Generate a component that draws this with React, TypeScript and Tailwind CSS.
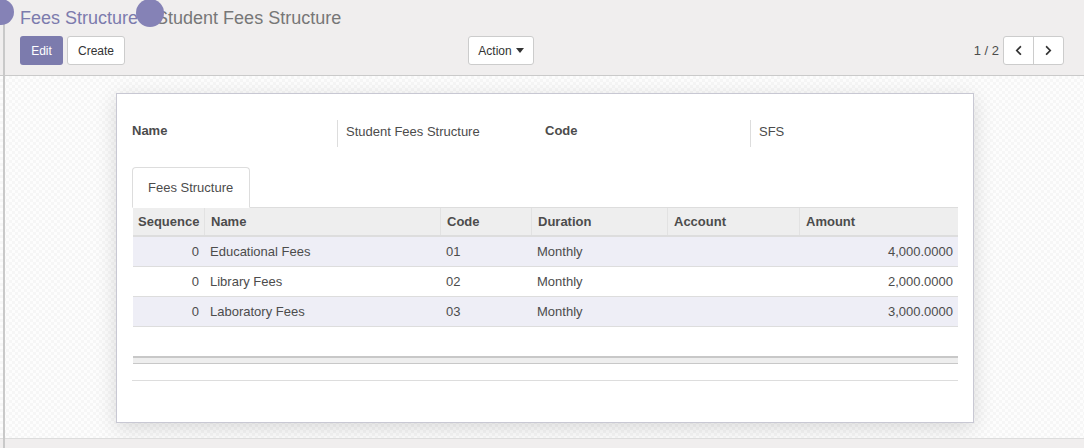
import React from "react";
import { FaChevronLeft, FaChevronRight } from "react-icons/fa";

const rows = [
  { seq: 0, name: "Educational Fees", code: "01", duration: "Monthly", account: "", amount: "4,000.0000" },
  { seq: 0, name: "Library Fees", code: "02", duration: "Monthly", account: "", amount: "2,000.0000" },
  { seq: 0, name: "Laboratory Fees", code: "03", duration: "Monthly", account: "", amount: "3,000.0000" },
];

export default function App() {
  return (
    <div className="relative w-[1084px] h-[448px] overflow-hidden bg-[#f0eeee] text-[13px] text-[#4c4c4c] font-['Liberation_Sans',Arial,sans-serif] flex flex-col">
      {/* left vertical line */}
      <div className="absolute left-[3px] top-[24px] bottom-0 w-[2px] bg-[#c9c9c9] z-10" />

      {/* control panel */}
      <div className="h-[76px] shrink-0 border-b border-[#cacaca] px-[20px] pt-[5px] flex flex-col">
        <div className="relative h-[26px] flex items-center text-[18px] leading-[26px]">
          <span className="text-[#7c7bad]">Fees Structure</span>
          <span className="text-[#777] px-[5px]">/</span>
          <span className="text-[#777] ml-[3px]">Student Fees Structure</span>
        </div>
        <div className="mt-[5px] flex items-center h-[29px]">
          <div className="flex gap-[4px] w-[448px]">
            <button className="h-[29px] w-[43px] rounded-[3px] bg-[#7c7bad] text-white text-[12px]">Edit</button>
            <button className="h-[29px] w-[58px] rounded-[3px] bg-white border border-[#cccccc] text-[#333] text-[12px]">Create</button>
          </div>
          <button className="h-[29px] w-[66px] rounded-[3px] bg-white border border-[#cccccc] text-[#333] text-[12px] flex items-center justify-center gap-[4px]">
            Action
            <svg width="8" height="5" viewBox="0 0 8 5"><path d="M0 0h8L4 5z" fill="#333" /></svg>
          </button>
          <div className="flex-1" />
          <span className="text-[13px] text-[#4c4c4c] mr-[4px]">1 / 2</span>
          <div className="flex h-[29px] rounded-[3px] border border-[#cccccc] bg-white">
            <button className="w-[30px] flex items-center justify-center border-r border-[#cccccc] text-[#333]">
              <FaChevronLeft size={11} />
            </button>
            <button className="w-[29px] flex items-center justify-center text-[#333]">
              <FaChevronRight size={11} />
            </button>
          </div>
        </div>
      </div>

      {/* sheet background */}
      <div className="h-[362px] shrink-0 bg-[repeating-conic-gradient(#f6f6f6_0_25%,#fdfdfd_0_50%)] bg-[length:6px_6px] pt-[17px] pl-[116px]">
        <div className="w-[858px] h-[330px] bg-white border border-[#c8c8d3] shadow-[0_5px_20px_rgba(0,0,0,0.14)] px-[15px] pt-[26px]">
          {/* name/code row */}
          <div className="flex h-[27px] items-stretch">
            <div className="w-[205px] font-bold pt-[1px]">Name</div>
            <div className="w-[208px] border-l border-[#dddddd] pl-[8px] pt-[2px]">Student Fees Structure</div>
            <div className="w-[205px] font-bold pt-[1px]">Code</div>
            <div className="w-[208px] border-l border-[#dddddd] pl-[8px] pt-[2px]">SFS</div>
          </div>

          {/* tabs */}
          <div className="mt-[20px] flex border-b border-[#dddddd] h-[41px]">
            <div className="w-[118px] h-[41px] -mb-px bg-white border border-[#dddddd] border-b-white rounded-t-[4px] flex items-center pl-[15px]">
              Fees Structure
            </div>
          </div>

          {/* table */}
          <div className="pl-[1px]">
            <div className="flex h-[29px] bg-[#eeeeee] border-b-2 border-[#dddddd] font-bold items-center">
              <div className="w-[71px] px-[5px]">Sequence</div>
              <div className="w-[236px] px-[6px] border-l border-[#e2e2e2] h-full flex items-center">Name</div>
              <div className="w-[91px] px-[6px] border-l border-[#e2e2e2] h-full flex items-center">Code</div>
              <div className="w-[136px] px-[6px] border-l border-[#e2e2e2] h-full flex items-center">Duration</div>
              <div className="w-[132px] px-[6px] border-l border-[#e2e2e2] h-full flex items-center">Account</div>
              <div className="flex-1 px-[6px] border-l border-[#e2e2e2] h-full flex items-center">Amount</div>
            </div>
            {rows.map((r, i) => (
              <div
                key={i}
                className={`flex h-[30px] items-center border-b border-[#dddddd] ${i % 2 === 0 ? "bg-[#eeeef6]" : "bg-white"}`}
              >
                <div className="w-[71px] px-[5px] text-right">{r.seq}</div>
                <div className="w-[236px] px-[6px]">{r.name}</div>
                <div className="w-[91px] px-[6px]">{r.code}</div>
                <div className="w-[136px] px-[6px]">{r.duration}</div>
                <div className="w-[132px] px-[6px]">{r.account}</div>
                <div className="flex-1 px-[5px] text-right">{r.amount}</div>
              </div>
            ))}
            <div className="h-[29px]" />
            <div className="h-[8px] bg-[#eeeeee] border-t-2 border-b border-[#c8c8c8]" />
          </div>
          <div className="mt-[16px] border-t border-[#dddddd]" />
        </div>
      </div>

      {/* bottom bar */}
      <div className="flex-1 bg-[#f0eeee] border-t border-[#dddddd]" />

      {/* tour circles */}
      <div className="absolute left-[-12px] top-[-1px] w-[26px] h-[26px] rounded-full bg-[#8582b6] z-20" />
      <div className="absolute left-[136px] top-[-1px] w-[28px] h-[28px] rounded-full bg-[#8582b6] z-20" />
    </div>
  );
}
